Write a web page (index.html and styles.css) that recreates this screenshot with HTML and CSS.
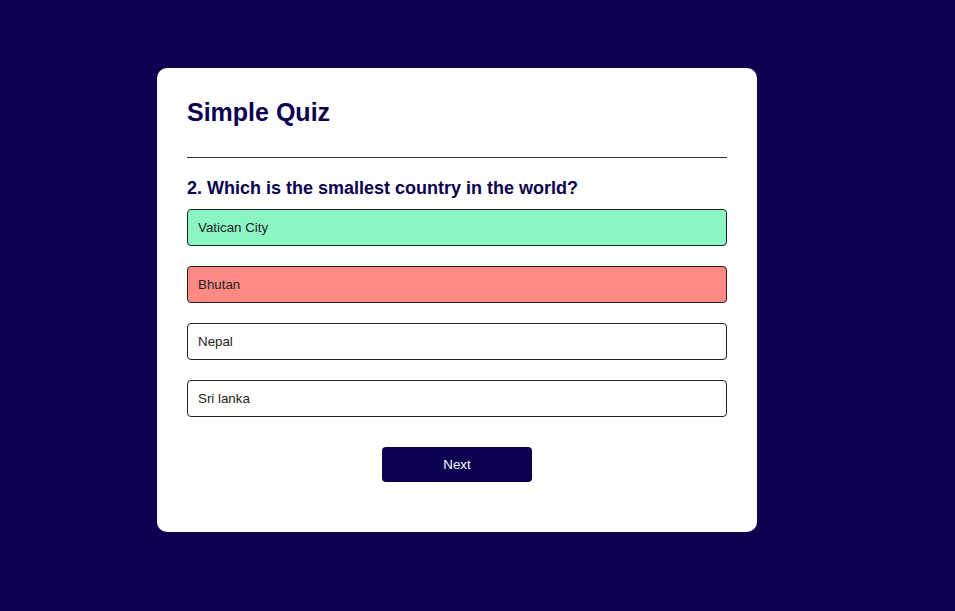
FILE: index.html
```html
<!DOCTYPE html>
<html>
<head>
<meta charset="utf-8">
<link rel="stylesheet" href="styles.css">
</head>
<body>
<div class="app">
  <h1 class="title">Simple Quiz</h1>
  <div class="quiz">
    <h2 class="question">2. Which is the smallest country in the world?</h2>
    <div class="answers">
      <button class="btn correct">Vatican City</button>
      <button class="btn incorrect">Bhutan</button>
      <button class="btn">Nepal</button>
      <button class="btn">Sri lanka</button>
    </div>
    <button class="next-btn">Next</button>
  </div>
</div>
</body>
</html>
```
FILE: styles.css
```css
* {
  margin: 0;
  padding: 0;
  box-sizing: border-box;
  font-family: "Liberation Sans", Arial, sans-serif;
}
body {
  background: #0c0050;
  min-height: 611px;
}
.app {
  background: #fff;
  width: 600px;
  margin: 68px 0 0 157px;
  border-radius: 10px;
  padding: 30px;
}
.title {
  font-size: 25px;
  color: #0c0050;
  font-weight: 600;
  border-bottom: 1px solid #333;
  padding-bottom: 30px;
}
.quiz {
  padding: 20px 0;
}
.question {
  font-size: 18px;
  color: #0c0050;
  font-weight: 600;
}
.btn {
  background: #fff;
  color: #222;
  font-size: 13.333px;
  font-weight: 500;
  width: 100%;
  border: 1px solid #222;
  padding: 10px;
  margin: 10px 0;
  text-align: left;
  border-radius: 4px;
}
.correct {
  background: #8cf5c4;
}
.incorrect {
  background: #ff8a84;
}
.next-btn {
  background: #0c0050;
  color: #fff;
  font-size: 13.333px;
  font-weight: 500;
  width: 150px;
  border: 0;
  padding: 10px;
  margin: 20px auto 0;
  border-radius: 4px;
  display: block;
}
```
